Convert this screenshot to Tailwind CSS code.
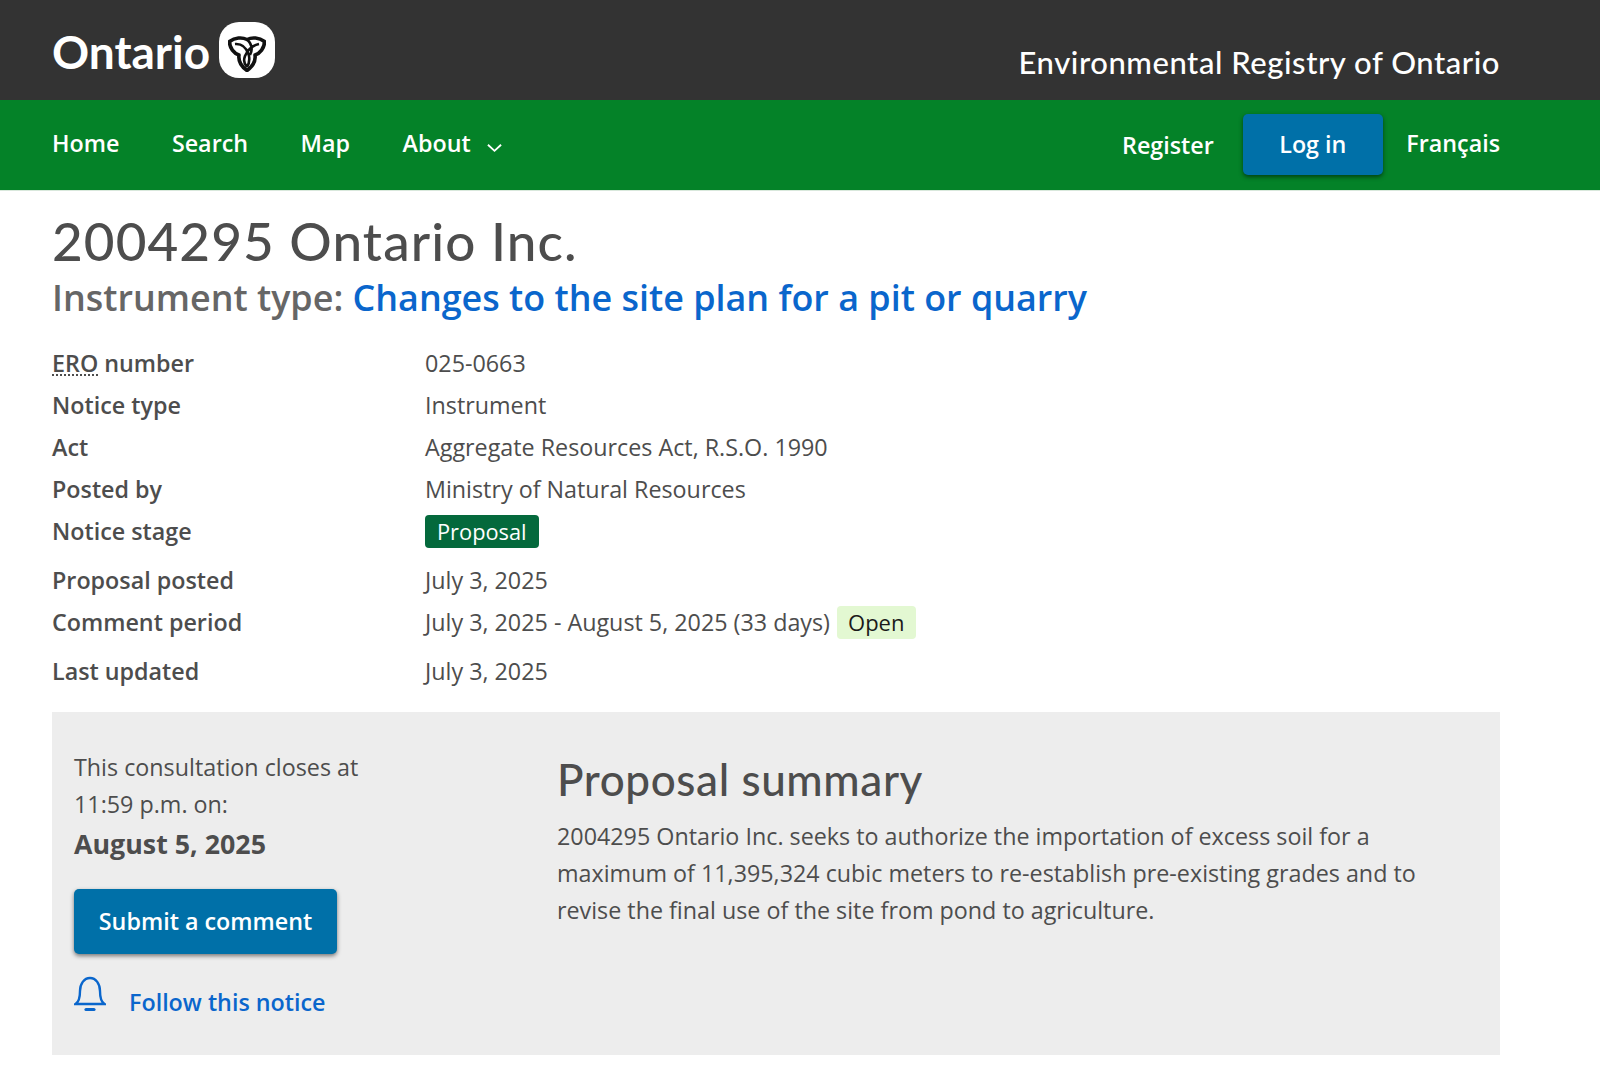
<!DOCTYPE html>
<html lang="en">
<head>
<meta charset="UTF-8">
<title>2004295 Ontario Inc. - Environmental Registry of Ontario</title>
<script src="https://cdn.jsdelivr.net/npm/@tailwindcss/browser@4"></script>
</head>
<body class="bg-white font-['Open_Sans',sans-serif] text-[23.3px] text-[#4d4d4d]">

<!-- Top bar -->
<header class="h-[100px] bg-[#333333] pl-[52px] pr-[100px] flex justify-between text-white">
  <div class="flex items-start pt-[22px] gap-[9px]">
    <span class="font-['Lato',sans-serif] font-bold text-[46px] leading-[60px]">Ontario</span>
    <span class="w-[56px] h-[56px] rounded-[20px] bg-white flex items-center justify-center">
      <svg viewBox="0 0 38 36" class="w-[38px] h-[36px] mt-[8px]" fill="none" stroke="#111" stroke-width="3.6" stroke-linejoin="round">
        <path d="M1.5 5.5 C7 1.5 14 1 19 3.5 C24 1 31 1.5 36.5 5.5 C36.5 12 32 17.5 27 19 C28 26 24 31 19 34.5 C14 31 10 26 11 19 C6 17.5 1.5 12 1.5 5.5 Z"/>
        <path d="M19 3.5 C24 8 25 13 22 19 M7 8 C13 7.5 18 11 20.5 18 C22 23 21.5 27 19 31 M31 8 C26 9 20 13 17 20 C15.5 24 16 28 19 31" stroke-width="2.6"/>
      </svg>
    </span>
  </div>
  <div class="font-['Lato',sans-serif] font-medium text-[31px] tracking-[0.55px] leading-[40px] pt-[42px]">Environmental Registry of Ontario</div>
</header>

<!-- Main nav -->
<nav class="h-[91px] bg-[#048228] border-b border-[#d9e8dc] pl-[52px] pr-[100px] flex items-center justify-between text-white font-semibold">
  <div class="flex items-center gap-[52.5px] mb-[3px]">
    <a>Home</a>
    <a>Search</a>
    <a>Map</a>
    <a class="flex items-center gap-[16px]">About
      <svg viewBox="0 0 16 10" class="w-[15px] h-[10px] mt-[9px]" fill="none" stroke="white" stroke-width="2"><path d="M1 1.5 L8 8 L15 1.5"/></svg>
    </a>
  </div>
  <div class="flex items-center">
    <a class="mr-[29px]">Register</a>
    <a class="w-[140px] h-[61px] mb-[1px] rounded-[5px] bg-[#0070a8] shadow-[0_2px_4px_rgba(0,0,0,0.5)] flex items-center justify-center">Log in</a>
    <a class="ml-[23.5px] mb-[4px]">Français</a>
  </div>
</nav>

<main class="pl-[52px] pr-[100px]">
  <h1 class="font-['Lato',sans-serif] font-medium text-[53px] tracking-[1.1px] leading-[60px] mt-[20px]">2004295 Ontario Inc.</h1>
  <p class="font-semibold text-[35.9px] leading-[48px] mt-[3px] text-[#666666]">Instrument type: <a class="text-[#0a66cc]">Changes to the site plan for a pit or quarry</a></p>

  <dl class="grid grid-cols-[373px_1fr] mt-[20px] leading-[42px]">
    <dt class="font-semibold"><abbr class="underline decoration-dotted decoration-2 underline-offset-2">ERO</abbr> number</dt>
    <dd>025-0663</dd>
    <dt class="font-semibold">Notice type</dt>
    <dd>Instrument</dd>
    <dt class="font-semibold">Act</dt>
    <dd>Aggregate Resources Act, R.S.O. 1990</dd>
    <dt class="font-semibold">Posted by</dt>
    <dd>Ministry of Natural Resources</dd>
    <dt class="font-semibold h-[49px]">Notice stage</dt>
    <dd class="h-[49px]"><span class="inline-block bg-[#04693c] text-white text-[21.8px] rounded-[4px] px-[12px] leading-[33px]">Proposal</span></dd>
    <dt class="font-semibold">Proposal posted</dt>
    <dd>July 3, 2025</dd>
    <dt class="font-semibold h-[49px]">Comment period</dt>
    <dd class="h-[49px]">July 3, 2025 - August 5, 2025 (33 days) <span class="inline-block bg-[#e3f8d2] text-[#1a1a1a] text-[22px] rounded-[4px] pl-[11px] pr-[12px] ml-[1px] leading-[33px]">Open</span></dd>
    <dt class="font-semibold">Last updated</dt>
    <dd>July 3, 2025</dd>
  </dl>

  <section class="mt-[20px] h-[343px] bg-[#ededed] flex">
    <div class="w-[505px] pl-[22px] pt-[37px] shrink-0">
      <p class="leading-[37px] w-[320px]">This consultation closes at 11:59 p.m. on:</p>
      <p class="font-bold text-[26.8px] leading-[40px] mt-[1px]">August 5, 2025</p>
      <a class="mt-[25px] w-[263px] h-[65px] rounded-[5px] bg-[#0070a8] shadow-[0_2px_4px_rgba(0,0,0,0.5)] text-white font-semibold flex items-center justify-center">Submit a comment</a>
      <a class="mt-[22px] flex items-end gap-[23px] text-[#0a66cc] font-semibold">
        <svg viewBox="0 0 32 36" class="w-[32px] h-[36px] mb-[13px]" fill="none" stroke="#0a66cc" stroke-width="2.4" stroke-linecap="round"><path d="M1.5 28 H30.5 C27 26 26 22 26 15 C26 8 22 2 16 2 C10 2 6 8 6 15 C6 22 5 26 1.5 28 Z"/><path d="M12 33.5 H20" stroke-width="3.2"/></svg>
        <span class="leading-[46px]">Follow this notice</span>
      </a>
    </div>
    <div class="flex-1 pt-[42px] pr-[60px]">
      <h2 class="font-['Lato',sans-serif] font-medium text-[44px] tracking-[0.6px] leading-[50px]">Proposal summary</h2>
      <p class="leading-[37px] mt-[14px]">2004295 Ontario Inc. seeks to authorize the importation of excess soil for a maximum of 11,395,324 cubic meters to re-establish pre-existing grades and to revise the final use of the site from pond to agriculture.</p>
    </div>
  </section>
</main>
</body>
</html>
